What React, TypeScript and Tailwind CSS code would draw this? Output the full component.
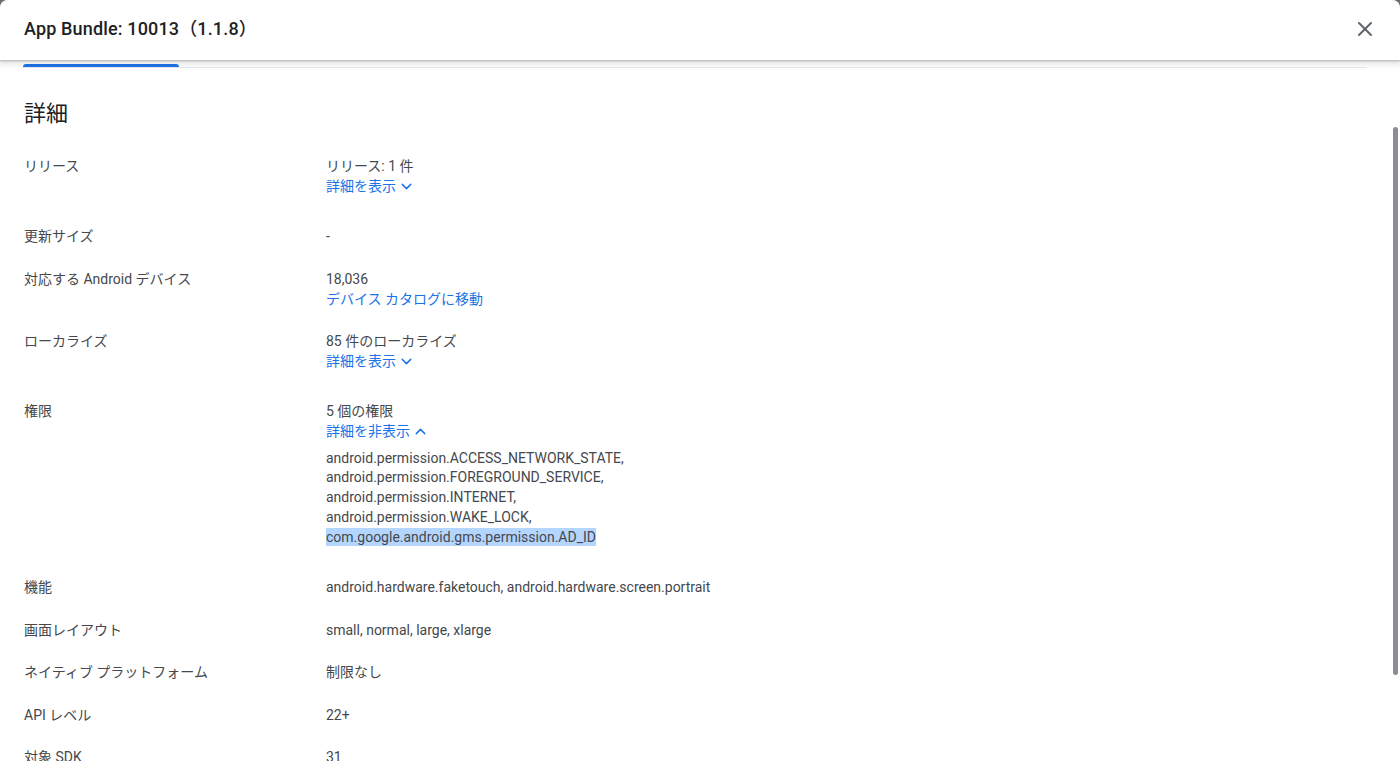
import { ChevronDown, ChevronUp, X } from 'lucide-react';

const font = { fontFamily: 'Roboto, "Noto Sans CJK JP", sans-serif' };

const permissions = [
  'android.permission.ACCESS_NETWORK_STATE,',
  'android.permission.FOREGROUND_SERVICE,',
  'android.permission.INTERNET,',
  'android.permission.WAKE_LOCK,',
];

function Row({ label, children }: { label: string; children: React.ReactNode }) {
  return (
    <div className="grid grid-cols-[302px_1fr] pt-[11px] pb-[11.5px] text-[14px] leading-[20px] text-[#45484c]">
      <div>{label}</div>
      <div>{children}</div>
    </div>
  );
}

function ToggleLink({ open }: { open?: boolean }) {
  return (
    <div className="mb-[7.5px]">
      <button type="button" className="inline-flex items-center gap-[2px] text-[#1a73e8] cursor-pointer">
        {open ? '詳細を非表示' : '詳細を表示'}
        {open ? (
          <ChevronUp className="w-[17px] h-[17px]" strokeWidth={2} />
        ) : (
          <ChevronDown className="w-[17px] h-[17px]" strokeWidth={2} />
        )}
      </button>
    </div>
  );
}

export default function App() {
  return (
    <div className="h-screen w-full bg-[#6e6e6e] overflow-hidden" style={font}>
      <div className="h-full bg-white rounded-t-lg flex flex-col overflow-hidden">
        <header className="relative z-10 h-[60px] shrink-0 flex items-center justify-between pl-6 pr-[23px] bg-white shadow-[0_1px_2px_rgba(60,64,67,0.3),0_2px_6px_2px_rgba(60,64,67,0.15)]">
          <h2 className="mb-[3px] text-[18px] font-medium text-[#202124] tracking-[0.15px]">App Bundle: 10013（1.1.8）</h2>
          <button type="button" className="mb-[2px] text-[#5f6368]">
            <X className="w-6 h-6" strokeWidth={2} />
          </button>
        </header>

        <div className="relative flex-1 overflow-hidden">
          <div className="pl-[23px] pr-[33px]">
            <div className="relative h-[8px]">
              <div className="absolute left-0 right-0 top-[7px] h-px bg-[#e8eaed]" />
              <div className="absolute left-0 top-[4px] w-[156px] h-[3px] bg-[#1a73e8] rounded-t-[3px]" />
            </div>
            <div className="pl-px">
              <h3 className="mt-[32px] mb-[17px] text-[22px] leading-[28px] text-[#202124]">詳細</h3>

              <Row label="リリース">
                <div>リリース: 1 件</div>
                <ToggleLink />
              </Row>
              <Row label="更新サイズ">-</Row>
              <Row label="対応する Android デバイス">
                <div>18,036</div>
                <a className="text-[#1a73e8] cursor-pointer">デバイス カタログに移動</a>
              </Row>
              <Row label="ローカライズ">
                <div>85 件のローカライズ</div>
                <ToggleLink />
              </Row>
              <Row label="権限">
                <div>5 個の権限</div>
                <ToggleLink open />
                <div className="mb-[7.5px] leading-[19.75px]">
                  {permissions.map((p) => (
                    <div key={p}>{p}</div>
                  ))}
                  <div>
                    <span className="bg-[#b4d5fe] py-px">com.google.android.gms.permission.AD_ID</span>
                  </div>
                </div>
              </Row>
              <Row label="機能">android.hardware.faketouch, android.hardware.screen.portrait</Row>
              <Row label="画面レイアウト">small, normal, large, xlarge</Row>
              <Row label="ネイティブ プラットフォーム">制限なし</Row>
              <Row label="API レベル">22+</Row>
              <Row label="対象 SDK">31</Row>
            </div>
          </div>

          <div className="absolute right-[2px] top-[67px] w-[5px] h-[548px] rounded-full bg-[#8a8d91]" />
        </div>
      </div>
    </div>
  );
}
